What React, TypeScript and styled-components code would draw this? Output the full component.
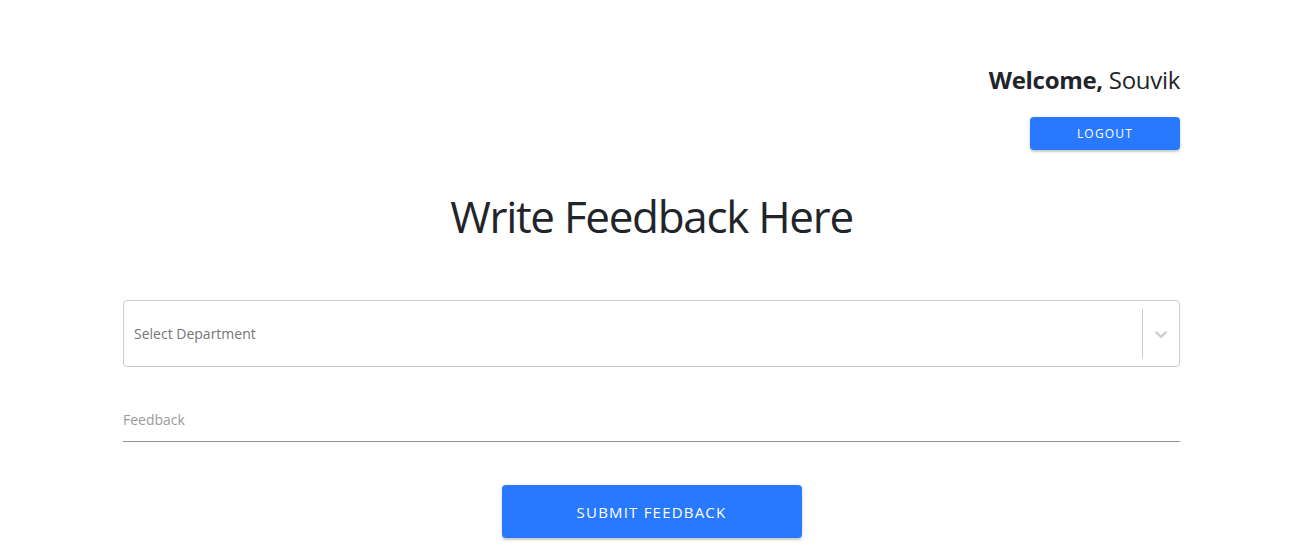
import React from "react";
import styled, { createGlobalStyle } from "styled-components";

const Global = createGlobalStyle`
  html, body { margin: 0; padding: 0; background: #fff; }
  body { font-family: "Open Sans", "Noto Sans", sans-serif; color: #212529; }
  * { box-sizing: border-box; }
`;

const Page = styled.div`
  width: 1057px;
  margin-left: 123px;
  padding-top: 62px;
  padding-bottom: 20px;
`;

const Header = styled.header`
  display: flex;
  flex-direction: column;
  align-items: flex-end;
  gap: 19px;
`;

const Welcome = styled.div`
  font-size: 24px;
  line-height: 36px;
  letter-spacing: -0.3px;
  color: #212529;
  b { font-weight: 700; }
`;

const Button = styled.button<{ $big?: boolean }>`
  border: none;
  border-radius: 4px;
  background: #2979ff;
  color: #fff;
  font-family: inherit;
  cursor: pointer;
  text-transform: uppercase;
  box-shadow: 0 2px 2px rgba(0,0,0,0.14), 0 1px 4px rgba(0,0,0,0.12);
  width: ${p => (p.$big ? "300px" : "150px")};
  height: ${p => (p.$big ? "53px" : "33px")};
  font-size: ${p => (p.$big ? "15px" : "12px")};
  letter-spacing: 1.2px;
`;

const Title = styled.h1`
  margin: 36px 0 0;
  text-align: center;
  font-weight: 400;
  font-size: 44px;
  line-height: 60px;
  letter-spacing: -1.3px;
  color: #212529;
`;

const Form = styled.form`
  margin-top: 54px;
  display: flex;
  flex-direction: column;
`;

const Select = styled.div`
  height: 67px;
  border: 1px solid #cccccc;
  border-radius: 4px;
  display: flex;
  align-items: center;
  padding-left: 10px;
`;

const Placeholder = styled.span`
  flex: 1;
  font-size: 14px;
  color: #757575;
`;

const Separator = styled.span`
  width: 1px;
  align-self: stretch;
  margin: 8px 0;
  background: #cccccc;
`;

const Chevron = styled.span`
  width: 36px;
  display: flex;
  justify-content: center;
  align-items: center;
  color: #cccccc;
`;

const Field = styled.div`
  margin-top: 42px;
  border-bottom: 1px solid #949494;
  height: 33px;
  display: flex;
  align-items: flex-start;
`;

const Label = styled.span`
  font-size: 14px;
  line-height: 22px;
  color: #9a9a9a;
`;

const Actions = styled.div`
  margin-top: 43px;
  display: flex;
  justify-content: center;
`;

export default function App() {
  return (
    <>
      <Global />
      <Page>
        <Header>
          <Welcome>
            <b>Welcome,</b> Souvik
          </Welcome>
          <Button type="button">Logout</Button>
        </Header>
        <Title>Write Feedback Here</Title>
        <Form onSubmit={e => e.preventDefault()}>
          <Select>
            <Placeholder>Select Department</Placeholder>
            <Separator />
            <Chevron>
              <svg width="20" height="20" viewBox="0 0 20 20" fill="currentColor">
                <path d="M4.516 7.548c0.436-0.446 1.043-0.481 1.576 0l3.908 3.747 3.908-3.747c0.533-0.481 1.141-0.446 1.574 0 0.436 0.445 0.408 1.197 0 1.615-0.406 0.418-4.695 4.502-4.695 4.502-0.217 0.223-0.502 0.335-0.787 0.335s-0.57-0.112-0.789-0.335c0 0-4.287-4.084-4.695-4.502s-0.436-1.17 0-1.615z" />
              </svg>
            </Chevron>
          </Select>
          <Field>
            <Label>Feedback</Label>
          </Field>
          <Actions>
            <Button type="submit" $big>Submit Feedback</Button>
          </Actions>
        </Form>
      </Page>
    </>
  );
}
